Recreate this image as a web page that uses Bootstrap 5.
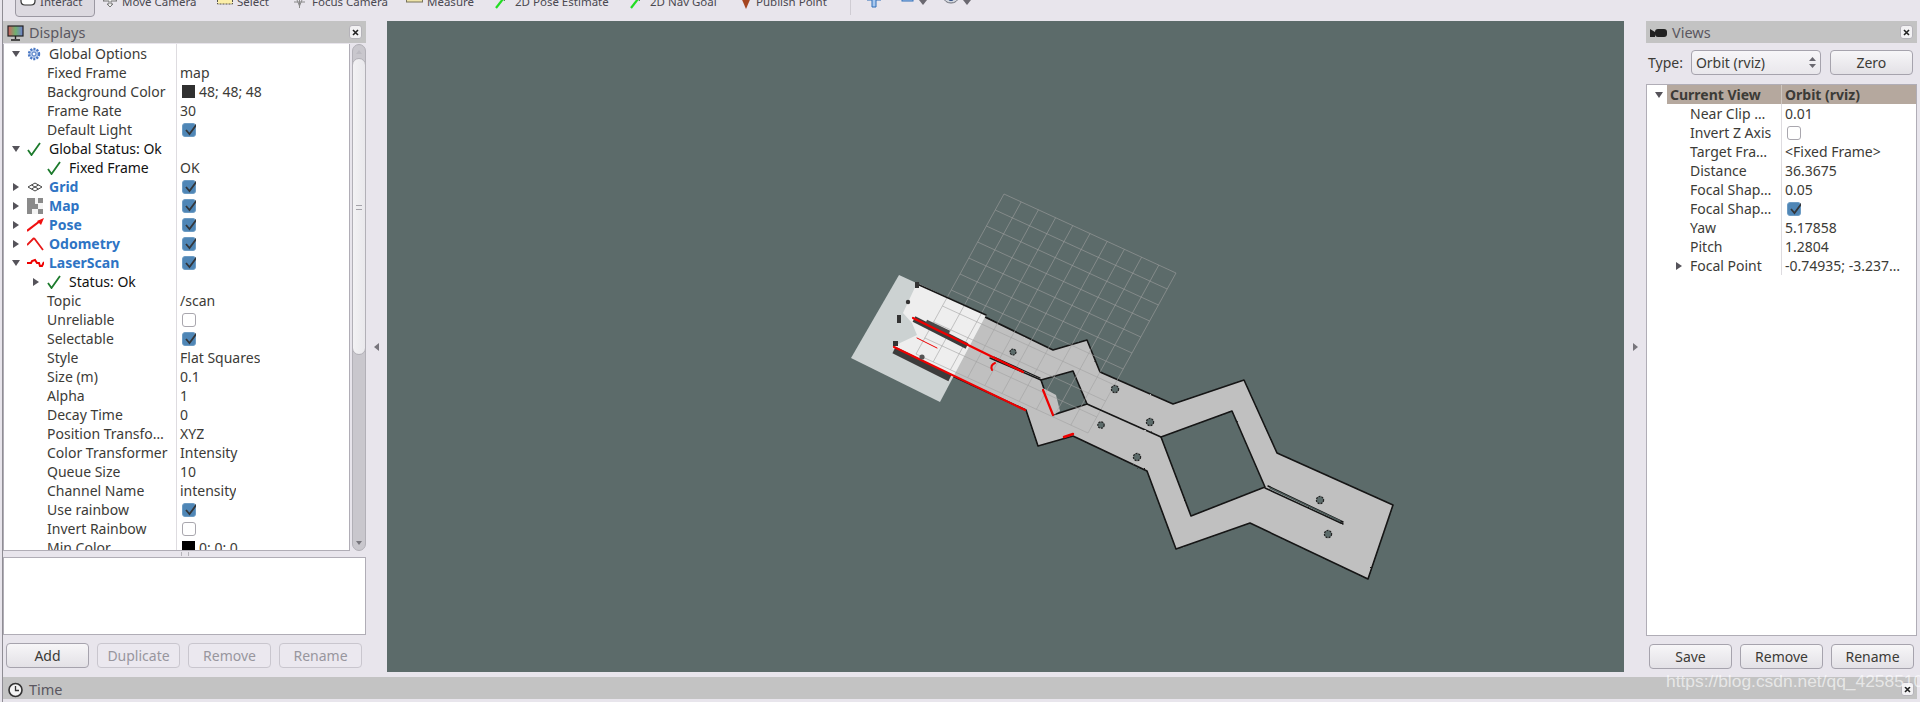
<!DOCTYPE html>
<html lang="en">
<head>
  <meta charset="UTF-8">
  <title>RViz</title>
  <link href="https://cdn.jsdelivr.net/npm/bootstrap@5.3.3/dist/css/bootstrap.min.css" rel="stylesheet">
  <style>
    html, body { height: 702px; overflow: hidden; }
    body { background: #e8e5ec; font-family: "Noto Sans", sans-serif; font-size: 14px; color: #3c3b37; }
    .rv-root { width: 1920px; height: 702px; padding: 0 3px 0 3px; position: relative; }
    .rv-root::before { content: ""; position: absolute; left: 2px; top: 0; bottom: 0; width: 1px; background: #8f8d94; }

    .rv-toolbar { height: 21px; overflow: hidden; align-items: flex-end; padding-left: 12px; }
    .rv-tool { height: 30px; flex: none; display: flex; align-items: center; color: #4a4850; padding-bottom: 8px; white-space: nowrap; font-size: 11.5px; }
    .rv-tool svg { flex: none; margin-right: 4px; }
    .rv-tool.rv-on { background: #dcd9e0; border: 1px solid #9b98a2; border-radius: 0 0 4px 4px; height: 26px; padding: 0 0 4px 4px; width: 80px; margin: 0 7px 4px 0; }
    .rv-sep { width: 1px; height: 16px; background: #cfccd3; margin-bottom: 6px; flex: none; }

    .rv-main { height: 656px; }
    .rv-dock-l { width: 363px; flex: none; }
    .rv-dock-r { width: 271px; flex: none; }
    .rv-gutter { width: 21px; flex: none; height: 651px; }
    .rv-title { height: 22px; background: #c3c3c3; padding: 2px 0 0 4px; color: #5a5760; font-size: 14.5px; flex: none; position: relative; }
    .rv-title svg { margin-right: 5px; flex: none; }
    .rv-close { position: absolute; right: 4px; top: 4px; width: 13px; height: 14px; background: #f2f1f3; border: 1px solid #b5b3b9; border-radius: 3px; }
    .rv-close svg { display: block; margin: 2px 0 0 1px; }

    .rv-view { width: 1237px; height: 651px; background: #5c6b6a; flex: none; display: block; }

    .rv-treewrap { height: 507px; margin-top: 1px; }
    .rv-tree { background: #fff; border: 1px solid #b0adb6; border-top: 0; overflow: hidden; }
    .rv-row { height: 19px; line-height: 19px; white-space: nowrap; }
    .rv-name { flex: none; height: 19px; display: flex; align-items: center; border-right: 1px solid #dedce0; overflow: hidden; }
    .rv-tree-l .rv-name { width: 173px; }
    .rv-tree-r .rv-name { width: 135px; }
    .rv-val { padding-left: 3px; display: flex; align-items: center; height: 19px; overflow: hidden; }
    .rv-arrow { width: 12px; flex: none; display: flex; justify-content: center; margin-right: 5px; }
    .rv-ico { width: 22px; flex: none; display: flex; align-items: center; }
    .rv-cat { color: #2e74c4; font-weight: 700; }
    .rv-blk { color: #111; }
    .rv-head { background: linear-gradient(90deg, #fff 20px, #b5a89e 20px); font-weight: 700; }
    .rv-head .rv-name { border-right-color: #cfc7c0; }

    .rv-chk { width: 14px; height: 14px; margin-left: 2px; border-radius: 3px; position: relative; flex: none; display: block; }
    .rv-chk-off { background: #fff; border: 1px solid #a9a7ae; }
    .rv-chk-on { background: #4f86b6; border: 1px solid #6d9cc4; }
    .rv-chk svg { position: absolute; left: 0; top: -3px; }
    .rv-swatch { width: 13px; height: 13px; margin: 0 4px 0 2px; flex: none; display: block; }

    .rv-scroll { width: 14px; margin-left: 2px; flex: none; background: #c9c7cd; border: 1px solid #b2b0b7; border-radius: 7px; position: relative; }
    .rv-thumb { position: absolute; left: -1px; right: -1px; top: 13px; height: 297px; background: linear-gradient(90deg, #f3f2f4, #e9e8ec); border: 1px solid #b2b0b7; border-radius: 7px; }
    .rv-grip { position: absolute; left: 3px; right: 3px; top: 146px; height: 5px; border-top: 1px solid #a5a3aa; border-bottom: 1px solid #a5a3aa; }
    .rv-scr-a { position: absolute; left: 3px; width: 0; height: 0; border-left: 3px solid transparent; border-right: 3px solid transparent; }

    .rv-splith { height: 6px; flex: none; display: flex; justify-content: center; align-items: center; }
    .rv-splith span { width: 8px; height: 4px; border-left: 1px solid #b5b3ba; border-right: 1px solid #b5b3ba; }
    .rv-log { height: 78px; background: #fff; border: 1px solid #b0adb6; flex: none; }

    .rv-btn { --bs-btn-padding-y: 0; --bs-btn-padding-x: 0; --bs-btn-font-size: 14px; --bs-btn-color: #3c3b37; --bs-btn-border-color: #a6a3ad; --bs-btn-border-radius: 4px; width: 83px; height: 25px; line-height: 22px; background: linear-gradient(#f7f6f8, #e3e1e6); flex: none; }
    .rv-btn:disabled, .rv-btn.disabled { --bs-btn-disabled-color: #98969e; --bs-btn-disabled-border-color: #c9c6ce; --bs-btn-disabled-bg: #e8e5ec; --bs-btn-disabled-opacity: 1; background: #ebe8ef; }
    .rv-btnrow { gap: 8px; padding-left: 3px; margin-top: 8px; }
    .rv-typerow { height: 25px; margin-top: 7px; margin-bottom: 9px; padding-left: 2px; flex: none; }
    .rv-select { width: 130px; height: 25px; margin-left: 8px; margin-right: 9px; border: 1px solid #a6a3ad; border-radius: 4px; background: linear-gradient(#f7f6f8, #e9e7ec); padding: 0 4px; flex: none; }

    .rv-time { height: 22px; width: 1914px; padding-top: 3px; }
    .rv-mark { position: absolute; left: 1666px; top: 671px; font: 17.4px "Liberation Sans", sans-serif; color: rgba(255,255,255,.62); white-space: nowrap; }
  </style>
</head>
<body>

<div class="rv-root">
  <!-- toolbar, cut off at the top -->
  <div class="rv-toolbar d-flex">
    <div class="rv-tool rv-on">
      <svg width="16" height="14" viewBox="0 0 16 14" class="me-1"><path d="M1 0v6q0 4 4 4h6q4 0 4-4V0" fill="#fff" stroke="#333" stroke-width="1.2"/><path d="M5 0v4M8 0v4M11 0v4" stroke="#333"/></svg>Interact
    </div>
    <div class="rv-tool" style="width:115px">
      <svg width="16" height="14" viewBox="0 0 16 14"><path d="M8 12l-3-3h2V6H1l7-6 7 6H9v3h2z" fill="#eee" stroke="#777"/></svg>Move Camera
    </div>
    <div class="rv-tool" style="width:74px">
      <svg width="16" height="14" viewBox="0 0 16 14"><rect x="0.5" y="-4" width="15" height="13" fill="#fbeea8" stroke="#55534c" stroke-dasharray="2 1"/></svg>Select
    </div>
    <div class="rv-tool" style="width:115px">
      <svg width="17" height="14" viewBox="0 0 17 14"><path d="M1 3h15M4 0l4.500 11L13 0M8.500 0v13M3 7h11" fill="none" stroke="#8a8a8a"/></svg>Focus Camera
    </div>
    <div class="rv-tool" style="width:89px">
      <svg width="17" height="14" viewBox="0 0 17 14"><rect x="0.500" y="-2" width="16" height="9" fill="#eee3a8" stroke="#77735a"/></svg>Measure
    </div>
    <div class="rv-tool" style="width:135px">
      <svg width="12" height="14" viewBox="0 0 12 14" class="me-2"><path d="M1 13L8 4" stroke="#22dd22" stroke-width="2.200"/><path d="M5 3l5-3v6z" fill="#116611"/></svg>2D Pose Estimate
    </div>
    <div class="rv-tool" style="width:110px">
      <svg width="12" height="14" viewBox="0 0 12 14" class="me-2"><path d="M1 13L8 4" stroke="#22dd22" stroke-width="2.200"/><path d="M5 3l5-3v6z" fill="#116611"/></svg>2D Nav Goal
    </div>
    <div class="rv-tool" style="width:110px">
      <svg width="12" height="14" viewBox="0 0 12 14" class="me-1"><path d="M0 0h12L6 14z" fill="#a5451f"/></svg>Publish Point
    </div>
    <div class="rv-sep"></div>
    <div class="rv-tool" style="margin-left:15px;width:35px">
      <svg width="16" height="14" viewBox="0 0 16 14"><path d="M1 1h14v4H10v7H6V5H1z" fill="#a9c8ee" stroke="#2f6fb8"/></svg>
    </div>
    <div class="rv-tool" style="width:42px">
      <svg width="14" height="12" viewBox="0 0 14 12" class="me-1"><rect x="1" y="-4" width="11" height="9" fill="#a9c8ee" stroke="#2f6fb8"/></svg>
      <svg width="8" height="5" viewBox="0 0 8 5" class="m-0"><path d="M0 0h8L4 5z" fill="#6a6870"/></svg>
    </div>
    <div class="rv-tool">
      <svg width="16" height="12" viewBox="0 0 16 12" class="me-1"><ellipse cx="8" cy="2" rx="7" ry="5" fill="#d3d8e0" stroke="#6d7078"/><circle cx="8" cy="2" r="3" fill="#2c4a80"/></svg>
      <svg width="8" height="5" viewBox="0 0 8 5" class="m-0"><path d="M0 0h8L4 5z" fill="#6a6870"/></svg>
    </div>
  </div>

  <div class="rv-main d-flex">
    <!-- Displays -->
    <div class="rv-dock-l d-flex flex-column">
      <div class="rv-title d-flex align-items-center">
        <svg width="17" height="16" viewBox="0 0 17 16">
          <defs><linearGradient id="scr" x1="0" x2="1"><stop offset="0" stop-color="#d06060"/><stop offset=".5" stop-color="#70b070"/><stop offset="1" stop-color="#7080d0"/></linearGradient></defs>
          <rect x="1" y="1" width="15" height="10" fill="url(#scr)" stroke="#222" stroke-width="1.200"/><path d="M8.500 11v3M4 15h9" stroke="#222" stroke-width="1.400"/>
        </svg>
        Displays
        <span class="rv-close"><svg width="9" height="9" viewBox="0 0 9 9"><path d="M2 2l5 5M7 2L2 7" stroke="#222" stroke-width="1.600"/></svg></span>
      </div>
      <div class="rv-treewrap d-flex">
        <div id="treeL" class="rv-tree rv-tree-l flex-grow-1"></div>
        <div class="rv-scroll">
          <span class="rv-scr-a" style="top:5px;border-bottom:4px solid #bdbbc2"></span>
          <div class="rv-thumb"><div class="rv-grip"></div></div>
          <span class="rv-scr-a" style="bottom:5px;border-top:4px solid #77757c"></span>
        </div>
      </div>
      <div class="rv-splith"><span></span></div>
      <div class="rv-log"></div>
      <div class="rv-btnrow d-flex">
        <button class="btn rv-btn">Add</button>
        <button class="btn rv-btn" disabled>Duplicate</button>
        <button class="btn rv-btn" disabled>Remove</button>
        <button class="btn rv-btn" disabled>Rename</button>
      </div>
    </div>

    <div class="rv-gutter d-flex align-items-center justify-content-center">
      <svg width="6" height="8" viewBox="0 0 6 8"><path d="M5 0v8L0 4z" fill="#77757c"/></svg>
    </div>

    <!-- 3D view: screen coordinates in the viewBox -->
    <svg id="view" class="rv-view" viewBox="387 21 1237 651">
      <defs>
        <filter id="rough" x="-5%" y="-5%" width="110%" height="110%">
          <feTurbulence type="fractalNoise" baseFrequency="0.3" numOctaves="2" seed="4"/>
          <feDisplacementMap in="SourceGraphic" scale="1.500" xChannelSelector="R" yChannelSelector="G"/>
        </filter>
      </defs>
      <path filter="url(#rough)" fill="#c0c0c0" fill-rule="evenodd" stroke="#141414" stroke-width="1.600" stroke-linejoin="round" d="M917 284L1053 350L1087 340L1100 372L1173 404L1244 380L1277 453L1393 505L1368 579L1250 523L1176 549L1147 471L1073 436L1038 446L1026 410L892 348Z M1041 380L1073 371L1087 404L1053 415Z M1161 437L1232 411L1265 487L1191 516Z"/>
      <path fill="#c0c0c0" d="M1043 388L1056 395L1060 411L1053 415Z"/>
      <path fill="#ccd2d2" d="M899 275L851 358L940 402L986 315Z"/>
      <path fill="#eeeeee" d="M917 283L986 315L953 377L892 348L900 343L917 335L912 323L903 313Z"/>
      <g id="gridlines" stroke="#a0a0a0" stroke-opacity=".58" stroke-width="1"></g>
      <g fill="none" stroke="#141414" stroke-linecap="round" filter="url(#rough)">
        <path stroke-width="1.500" d="M917 284L986 315M1087 404L1161 437M1041 380L990 358"/>
        <path stroke-width="1.200" d="M1040 378L994 357"/>
        <path stroke-width="1.500" d="M1265 488L1343 524M1268 486L1343 522"/>
        <path stroke="#4b5a59" stroke-width="1.500" d="M1270 488L1340 521"/>
      </g>
      <g stroke="#3c3c3c" fill="none">
        <path stroke-width="7" d="M894 350L950 378"/>
        <path stroke-width="6" d="M914 319L967 346"/>
        <path stroke-width="5" stroke="#4a4a4a" d="M926 322L949 333"/>
      </g>
      <g stroke="#ee0000" fill="none" stroke-linecap="round">
        <path stroke-width="2.200" d="M913 318L1023 372"/>
        <path stroke-width="2.200" d="M894 347L1025 410"/>
        <path stroke-width="1" d="M917 338L937 348"/>
        <path stroke-width="2.200" d="M1043 390L1053 415"/>
        <path stroke-width="2.400" d="M1064 437L1073 434"/>
        <path stroke-width="2" d="M995 363q-5 2-3 7"/>
      </g>
      <g fill="#5c6b6a" stroke="#222" stroke-width="1.200" stroke-dasharray="2 1">
        <circle cx="1013" cy="352" r="3"/>
        <circle cx="1115" cy="389" r="3.600"/>
        <circle cx="1150" cy="422" r="3.600"/>
        <circle cx="1101" cy="425" r="3.200"/>
        <circle cx="1137" cy="457" r="3.600"/>
        <circle cx="1320" cy="500" r="3.600"/>
        <circle cx="1328" cy="534" r="3.600"/>
      </g>
      <g fill="#333">
        <rect x="915" y="282" width="4" height="6"/>
        <circle cx="908" cy="302" r="2.200"/>
        <rect x="897" y="315" width="4" height="8"/>
        <rect x="893" y="341" width="5" height="5"/>
        <circle cx="922" cy="357" r="2.600" fill="#555"/>
      </g>
    </svg>

    <div class="rv-gutter d-flex align-items-center justify-content-center" style="width:22px">
      <svg width="6" height="8" viewBox="0 0 6 8"><path d="M1 0v8l5-4z" fill="#77757c"/></svg>
    </div>

    <!-- Views -->
    <div class="rv-dock-r d-flex flex-column">
      <div class="rv-title d-flex align-items-center">
        <svg width="17" height="10" viewBox="0 0 17 10"><path d="M0 1l5 3V1h0v8L0 9z" fill="#222"/><rect x="5" y="1" width="12" height="8" rx="3" fill="#222"/></svg>
        Views
        <span class="rv-close"><svg width="9" height="9" viewBox="0 0 9 9"><path d="M2 2l5 5M7 2L2 7" stroke="#222" stroke-width="1.600"/></svg></span>
      </div>
      <div class="rv-typerow d-flex align-items-center">
        <span>Type:</span>
        <div class="rv-select d-flex align-items-center justify-content-between">
          <span>Orbit (rviz)</span>
          <svg width="7" height="13" viewBox="0 0 7 13"><path d="M3.500 1L7 5H0zM3.500 12L0 8h7z" fill="#6a6870"/></svg>
        </div>
        <button class="btn rv-btn">Zero</button>
      </div>
      <div id="treeR" class="rv-tree rv-tree-r" style="height:552px;border-top:1px solid #b0adb6"></div>
      <div class="rv-btnrow d-flex">
        <button class="btn rv-btn">Save</button>
        <button class="btn rv-btn">Remove</button>
        <button class="btn rv-btn">Rename</button>
      </div>
    </div>
  </div>

  <div class="rv-time rv-title d-flex align-items-center">
    <svg width="17" height="16" viewBox="0 0 16 16"><circle cx="8" cy="8" r="6.500" fill="#f4f4f4" stroke="#333" stroke-width="1.600"/><path d="M8 4v4.500h3.500" fill="none" stroke="#333" stroke-width="1.300"/></svg>
    Time
    <span class="rv-close" style="right:3px;top:5px"><svg width="9" height="9" viewBox="0 0 9 9"><path d="M2 2l5 5M7 2L2 7" stroke="#222" stroke-width="1.600"/></svg></span>
  </div>
  <div class="rv-mark">https://blog.csdn.net/qq_42585108</div>
</div>

<script src="https://cdn.jsdelivr.net/npm/bootstrap@5.3.3/dist/js/bootstrap.bundle.min.js"></script>
<script>
const icons = {
  gear: '<svg width="14" height="14" viewBox="0 0 14 14"><circle cx="7" cy="7" r="5" fill="#b9cdec" stroke="#4a78c4" stroke-width="2.400" stroke-dasharray="2 1.200"/><circle cx="7" cy="7" r="2" fill="#fff" stroke="#4a78c4"/></svg>',
  check: '<svg width="14" height="14" viewBox="0 0 14 14"><path d="M1 8l3.500 5L13 1" fill="none" stroke="#1c7a2c" stroke-width="1.800"/></svg>',
  grid: '<svg width="16" height="10" viewBox="0 0 16 10"><path d="M8 1l7 4-7 4-7-4zM4.500 3l7 4M11.500 3l-7 4" fill="none" stroke="#444"/></svg>',
  map: '<svg width="16" height="16" viewBox="0 0 16 16"><rect width="16" height="16" fill="#f4f4f4"/><path d="M0 0h8v6h3v5H5v5H0zM11 0h5v5h-5zM11 11h5v5h-5z" fill="#8a8a8a"/></svg>',
  pose: '<svg width="17" height="14" viewBox="0 0 17 14"><path d="M0 13L13 3" stroke="#f01010" stroke-width="2.200"/><path d="M10 3l7-3-3 7z" fill="#f01010"/></svg>',
  odom: '<svg width="17" height="14" viewBox="0 0 17 14"><path d="M0 8L7 1M7 1l9 12" fill="none" stroke="#e81818" stroke-width="1.800"/></svg>',
  laser: '<svg width="17" height="9" viewBox="0 0 17 9"><path d="M0 5h4l1-2 3-1 2 3h2l1 3h2l2-4" fill="none" stroke="#ee0000" stroke-width="2"/></svg>'
};
const tick = '<svg width="15" height="17" viewBox="0 0 15 17"><path d="M3 9l3.500 4L14 3" fill="none" stroke="#33363a" stroke-width="1.800"/></svg>';

// [level, arrow, icon, name, value, name class]
const leftRows = [
  [0, 'd', 'gear', 'Global Options', '', ''],
  [1, '', '', 'Fixed Frame', 'map', ''],
  [1, '', '', 'Background Color', '#303030|48; 48; 48', ''],
  [1, '', '', 'Frame Rate', '30', ''],
  [1, '', '', 'Default Light', 'on', ''],
  [0, 'd', 'check', 'Global Status: Ok', '', 'rv-blk'],
  [1, '', 'check', 'Fixed Frame', 'OK', 'rv-blk'],
  [0, 'r', 'grid', 'Grid', 'on', 'rv-cat'],
  [0, 'r', 'map', 'Map', 'on', 'rv-cat'],
  [0, 'r', 'pose', 'Pose', 'on', 'rv-cat'],
  [0, 'r', 'odom', 'Odometry', 'on', 'rv-cat'],
  [0, 'd', 'laser', 'LaserScan', 'on', 'rv-cat'],
  [1, 'r', 'check', 'Status: Ok', '', 'rv-blk'],
  [1, '', '', 'Topic', '/scan', ''],
  [1, '', '', 'Unreliable', 'off', ''],
  [1, '', '', 'Selectable', 'on', ''],
  [1, '', '', 'Style', 'Flat Squares', ''],
  [1, '', '', 'Size (m)', '0.1', ''],
  [1, '', '', 'Alpha', '1', ''],
  [1, '', '', 'Decay Time', '0', ''],
  [1, '', '', 'Position Transfo…', 'XYZ', ''],
  [1, '', '', 'Color Transformer', 'Intensity', ''],
  [1, '', '', 'Queue Size', '10', ''],
  [1, '', '', 'Channel Name', 'intensity', ''],
  [1, '', '', 'Use rainbow', 'on', ''],
  [1, '', '', 'Invert Rainbow', 'off', ''],
  [1, '', '', 'Min Color', '#000000|0; 0; 0', '']
];
const rightRows = [
  [0, 'd', '', 'Current View', 'Orbit (rviz)', ''],
  [1, '', '', 'Near Clip …', '0.01', ''],
  [1, '', '', 'Invert Z Axis', 'off', ''],
  [1, '', '', 'Target Fra…', '<Fixed Frame>', ''],
  [1, '', '', 'Distance', '36.3675', ''],
  [1, '', '', 'Focal Shap…', '0.05', ''],
  [1, '', '', 'Focal Shap…', 'on', ''],
  [1, '', '', 'Yaw', '5.17858', ''],
  [1, '', '', 'Pitch', '1.2804', ''],
  [1, 'r', '', 'Focal Point', '-0.74935; -3.237…', '']
];

function esc(s) { return s.replace(/&/g, '&amp;').replace(/</g, '&lt;'); }

function valueHtml(v) {
  if (v === 'on') return `<span class="rv-chk rv-chk-on">${tick}</span>`;
  if (v === 'off') return '<span class="rv-chk rv-chk-off"></span>';
  if (v[0] === '#') {
    const [c, t] = v.split('|');
    return `<span class="rv-swatch" style="background:${c}"></span>${t}`;
  }
  return esc(v);
}

function arrowHtml(a) {
  if (a === 'd') return '<svg width="8" height="6" viewBox="0 0 8 6"><path d="M0 0h8L4 6z" fill="#55535a"/></svg>';
  if (a === 'r') return '<svg width="6" height="8" viewBox="0 0 6 8"><path d="M0 0l6 4-6 4z" fill="#55535a"/></svg>';
  return '';
}

function fillTree(el, rows, pad0) {
  el.innerHTML = rows.map(([lvl, arrow, icon, name, value, cls]) => {
    const pad = pad0 + 20 * lvl;
    return `<div class="rv-row d-flex">
      <div class="rv-name" style="padding-left:${pad}px">
        <span class="rv-arrow">${arrowHtml(arrow)}</span>
        ${icon ? `<span class="rv-ico">${icons[icon]}</span>` : ''}
        <span class="${cls}">${esc(name)}</span>
      </div>
      <div class="rv-val">${valueHtml(value)}</div>
    </div>`;
  }).join('');
}

fillTree(document.getElementById('treeL'), leftRows, 6);
fillTree(document.getElementById('treeR'), rightRows, 6);
document.querySelector('#treeR .rv-row').classList.add('rv-head');

// 10 x 10 grid in the 3D view
const A = [1004, 194], u = [17.2, 7.9], v = [-8.8, 16];
let gl = '';
for (let i = 0; i <= 10; i++) {
  gl += `<line x1="${A[0] + u[0] * i}" y1="${A[1] + u[1] * i}" x2="${A[0] + u[0] * i + v[0] * 10}" y2="${A[1] + u[1] * i + v[1] * 10}"/>`;
  gl += `<line x1="${A[0] + v[0] * i}" y1="${A[1] + v[1] * i}" x2="${A[0] + v[0] * i + u[0] * 10}" y2="${A[1] + v[1] * i + u[1] * 10}"/>`;
}
document.getElementById('gridlines').innerHTML = gl;
</script>
</body>
</html>
